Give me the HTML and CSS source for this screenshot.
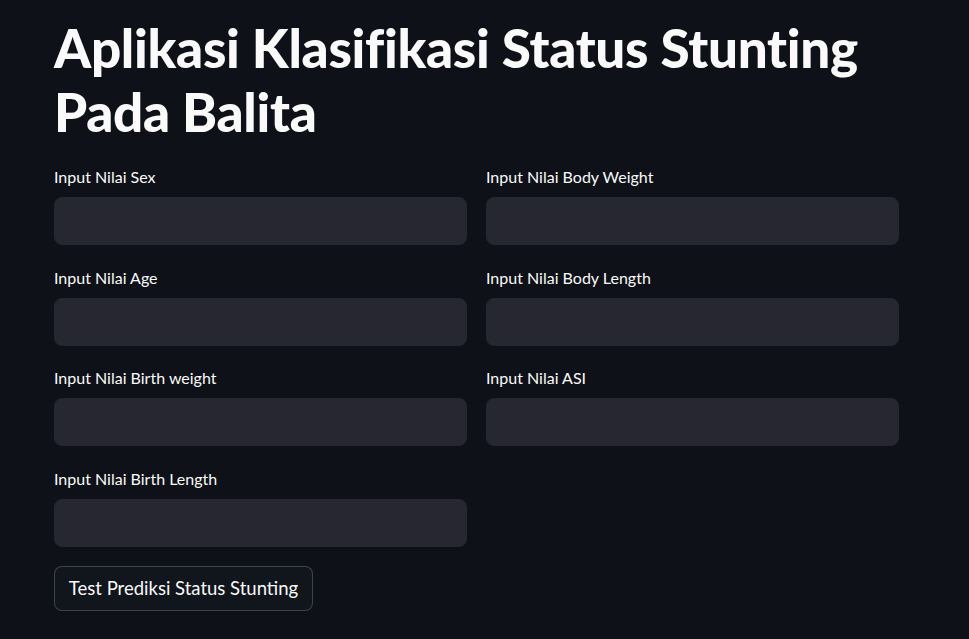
FILE: index.html
```html
<!DOCTYPE html>
<html lang="id">
<head>
<meta charset="utf-8">
<title>Aplikasi Klasifikasi Status Stunting</title>
<link rel="stylesheet" href="styles.css">
</head>
<body>
<main class="main">
  <h1 class="title">Aplikasi Klasifikasi Status Stunting Pada Balita</h1>
  <div class="columns">
    <div class="column">
      <div class="field"><label class="label">Input Nilai Sex</label><input class="input" type="text"></div>
      <div class="field"><label class="label">Input Nilai Age</label><input class="input" type="text"></div>
      <div class="field"><label class="label">Input Nilai Birth weight</label><input class="input" type="text"></div>
      <div class="field"><label class="label">Input Nilai Birth Length</label><input class="input" type="text"></div>
    </div>
    <div class="column">
      <div class="field"><label class="label">Input Nilai Body Weight</label><input class="input" type="text"></div>
      <div class="field"><label class="label">Input Nilai Body Length</label><input class="input" type="text"></div>
      <div class="field"><label class="label">Input Nilai ASI</label><input class="input" type="text"></div>
    </div>
  </div>
  <button class="button" type="button">Test Prediksi Status Stunting</button>
</main>
</body>
</html>
```
FILE: styles.css
```css
html, body {
  margin: 0;
  padding: 0;
  background: #0e1117;
  height: 100%;
}
body {
  font-family: Lato, "Noto Sans", sans-serif;
  color: #fafafa;
  font-variant-ligatures: none;
}
.main {
  padding: 16px 60px 0 54px;
}
.title {
  margin: 0;
  font-size: 53px;
  line-height: 64px;
  font-weight: 900;
  color: #fafafa;
  max-width: 855px;
  letter-spacing: -0.3px;
}
.columns {
  display: flex;
  gap: 19px;
  margin-top: 21px;
}
.column {
  width: 413px;
  display: flex;
  flex-direction: column;
  gap: 20.67px;
}
.field {
  display: flex;
  flex-direction: column;
}
.label {
  font-size: 16px;
  line-height: 24px;
  height: 24px;
  margin-bottom: 8px;
  color: #fafafa;
}
.input {
  height: 48px;
  box-sizing: border-box;
  border: 1px solid #262730;
  border-radius: 8px;
  background: #262730;
  outline: none;
  padding: 0 14px;
  color: #fafafa;
  font: inherit;
}
.button {
  margin-top: 19px;
  height: 45px;
  width: 259px;
  box-sizing: border-box;
  background: #11151c;
  border: 1px solid rgba(250, 250, 250, 0.2);
  border-radius: 8px;
  color: #fafafa;
  font-family: inherit;
  font-size: 18.5px;
  white-space: nowrap;
  padding: 0 10px;
  text-align: center;
}
```
